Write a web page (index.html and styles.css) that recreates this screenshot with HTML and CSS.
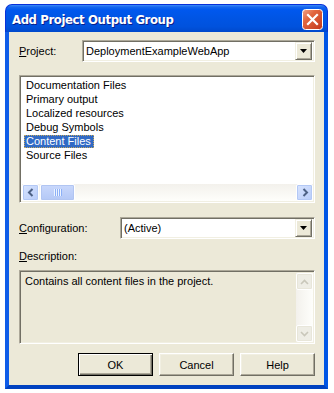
FILE: index.html
```html
<!DOCTYPE html>
<html>
<head>
<meta charset="utf-8">
<link rel="stylesheet" href="styles.css">
</head>
<body>
<div class="window">
  <div class="titlebar">
    <span class="title">Add Project Output Group</span>
    <span class="close">
      <svg width="21" height="21" viewBox="0 0 21 21">
        <defs>
          <linearGradient id="cg" x1="0" y1="0" x2="1" y2="1">
            <stop offset="0" stop-color="#F0A58A"/>
            <stop offset="0.35" stop-color="#E2673F"/>
            <stop offset="1" stop-color="#C2361A"/>
          </linearGradient>
        </defs>
        <rect x="0.5" y="0.5" width="20" height="20" rx="3" fill="url(#cg)" stroke="#FFFFFF"/>
        <path d="M6 6 L15 15 M15 6 L6 15" stroke="#FFFFFF" stroke-width="2.2" stroke-linecap="square"/>
      </svg>
    </span>
  </div>
  <div class="body">
    <div class="row project">
      <span class="label label-project"><u>P</u>roject:</span>
      <div class="combo">
        <span class="combo-text">DeploymentExampleWebApp</span>
        <span class="drop"><svg width="7" height="4" viewBox="0 0 7 4"><path d="M0 0 H7 L3.5 4 Z" fill="#000"/></svg></span>
      </div>
    </div>
    <div class="listbox">
      <ul class="items">
        <li>Documentation Files</li>
        <li>Primary output</li>
        <li>Localized resources</li>
        <li>Debug Symbols</li>
        <li class="sel-row"><span class="selected">Content Files</span></li>
        <li>Source Files</li>
      </ul>
      <div class="hscroll">
        <span class="sbtn"><svg width="8" height="9" viewBox="0 0 8 9"><path d="M5.5 1 L2 4.5 L5.5 8" fill="none" stroke="#4D6185" stroke-width="2"/></svg></span>
        <span class="thumb"><span class="grip"></span></span>
        <span class="track"></span>
        <span class="sbtn"><svg width="8" height="9" viewBox="0 0 8 9"><path d="M2.5 1 L6 4.5 L2.5 8" fill="none" stroke="#4D6185" stroke-width="2"/></svg></span>
      </div>
    </div>
    <div class="row config">
      <span class="label label-config"><u>C</u>onfiguration:</span>
      <div class="combo">
        <span class="combo-text">(Active)</span>
        <span class="drop"><svg width="7" height="4" viewBox="0 0 7 4"><path d="M0 0 H7 L3.5 4 Z" fill="#000"/></svg></span>
      </div>
    </div>
    <div class="desc-label"><u>D</u>escription:</div>
    <div class="descbox">
      <div class="desc-text">Contains all content files in the project.</div>
      <div class="vscroll">
        <span class="vbtn"><svg width="9" height="6" viewBox="0 0 9 6"><path d="M1 5 L4.5 1.5 L8 5" fill="none" stroke="#C9C7BA" stroke-width="1.6"/></svg></span>
        <span class="vtrack"></span>
        <span class="vbtn"><svg width="9" height="6" viewBox="0 0 9 6"><path d="M1 1 L4.5 4.5 L8 1" fill="none" stroke="#C9C7BA" stroke-width="1.6"/></svg></span>
      </div>
    </div>
    <div class="buttons">
      <span class="btn default">OK</span>
      <span class="btn">Cancel</span>
      <span class="btn">Help</span>
    </div>
  </div>
</div>
</body>
</html>
```

FILE: styles.css
```css
* { box-sizing: border-box; }
html, body { margin: 0; padding: 0; background: #FFFFFF; }
body {
  font-family: "Liberation Sans", Arial, sans-serif;
  font-size: 11px;
  color: #000;
}
.window {
  width: 323px;
  margin: 4px 0 0 5px;
}
.titlebar {
  height: 28px;
  flex: none;
  border-radius: 7px 7px 0 0;
  background: linear-gradient(#3C8DF8 0, #1767EE 2px, #0058EE 5px, #0055E5 45%, #0052DD 80%, #0049CC 100%);
  border: 1px solid #0831D9;
  border-bottom: none;
  display: flex;
  align-items: center;
  justify-content: space-between;
  padding: 1px 4px 0 6px;
}
.title {
  color: #FFFFFF;
  font-weight: bold;
  font-size: 13px;
  letter-spacing: -0.4px;
  font-family: "Liberation Sans Narrow", "DejaVu Sans Condensed", "Liberation Sans", sans-serif;
  text-shadow: 1px 1px 0 #0A1E8C;
}
.close { display: flex; margin-top: 1px; }
.body {
  background: #ECE9D8;
  border: 4px solid #0055E5;
  border-top: none;
  border-left-color: #0F5CE8;
  border-bottom-color: #0042C0;
  padding: 8px 9px 9px 10px;
  display: flex;
  flex-direction: column;
}
.body > * { flex: none; }
.row {
  display: flex;
  align-items: center;
  height: 22px;
}
.config { margin-top: 14px; }
.label { flex: none; }
.label-project { width: 63px; }
.label-config { width: 101px; }
.combo {
  flex: 1;
  height: 22px;
  background: #FFFFFF;
  border: 1px solid #ACA899;
  border-right-color: #FFFFFF;
  border-bottom-color: #FFFFFF;
  box-shadow: inset 1px 1px 0 #716F64, inset -1px -1px 0 #F1EFE2;
  display: flex;
  align-items: center;
  padding: 2px 2px 2px 3px;
}
.combo-text { flex: 1; }
.drop {
  width: 17px;
  height: 18px;
  flex: none;
  background: #ECE9D8;
  border: 1px solid #F1EFE2;
  border-right-color: #716F64;
  border-bottom-color: #716F64;
  box-shadow: inset 1px 1px 0 #FFFFFF, inset -1px -1px 0 #ACA899;
  display: flex;
  align-items: center;
  justify-content: center;
}
.listbox {
  margin-top: 13px;
  height: 128px;
  background: #FFFFFF;
  border: 1px solid #ACA899;
  border-right-color: #FFFFFF;
  border-bottom-color: #FFFFFF;
  box-shadow: inset 1px 1px 0 #716F64, inset -1px -1px 0 #F1EFE2;
  display: flex;
  flex-direction: column;
  padding: 2px 1px 1px 2px;
}
.items {
  list-style: none;
  margin: 0;
  padding: 1px 0 0 2px;
  flex: 1;
}
.items li {
  height: 14px;
  line-height: 13px;
  padding-left: 2px;
}
.items li.sel-row { padding-left: 0; }
.selected {
  display: inline-block;
  background: #316AC5;
  color: #FFFFFF;
  outline: 1px dotted #C5A85E;
  outline-offset: -1px;
  padding: 0 3px 0 2px;
  height: 13px;
}
.hscroll {
  height: 17px;
  flex: none;
  display: flex;
  background: linear-gradient(#F3F1EC, #FEFEFB);
}
.sbtn {
  width: 17px;
  height: 17px;
  flex: none;
  border: 1px solid #FFFFFF;
  border-radius: 2px;
  background: linear-gradient(135deg, #D8E4FE, #B8CCF9);
  box-shadow: inset 0 0 0 1px #B3C8F5;
  display: flex;
  align-items: center;
  justify-content: center;
}
.thumb {
  width: 35px;
  height: 17px;
  flex: none;
  margin-left: 1px;
  border: 1px solid #FFFFFF;
  border-radius: 2px;
  background: linear-gradient(#C9D8FC, #B4C8F6);
  box-shadow: inset 0 0 0 1px #B1C5F2;
  display: flex;
  align-items: center;
  justify-content: center;
}
.grip {
  width: 8px;
  height: 7px;
  background: repeating-linear-gradient(to right, #EEF4FE 0, #EEF4FE 1px, #8CB0F8 1px, #8CB0F8 2px);
}
.track { flex: 1; }
.desc-label {
  margin-top: 11px;
  height: 13px;
  line-height: 13px;
}
.descbox {
  margin-top: 7px;
  height: 74px;
  background: #ECE9D8;
  border: 1px solid #ACA899;
  border-right-color: #FFFFFF;
  border-bottom-color: #FFFFFF;
  box-shadow: inset 1px 1px 0 #716F64, inset -1px -1px 0 #F1EFE2;
  display: flex;
  padding: 2px 1px 1px 2px;
}
.desc-text {
  flex: 1;
  padding: 2px 0 0 3px;
  line-height: 13px;
}
.vscroll {
  width: 17px;
  flex: none;
  display: flex;
  flex-direction: column;
  background: linear-gradient(to right, #F3F1EC, #FEFEFB);
}
.vbtn {
  width: 17px;
  height: 17px;
  flex: none;
  border: 1px solid #FFFFFF;
  border-radius: 2px;
  background: #EEEDE5;
  box-shadow: inset 0 0 0 1px #E8E6DA;
  display: flex;
  align-items: center;
  justify-content: center;
}
.vtrack { flex: 1; }
.buttons {
  margin-top: 9px;
  height: 23px;
  display: flex;
  justify-content: flex-end;
  gap: 6px;
}
.btn {
  width: 75px;
  height: 23px;
  display: flex;
  align-items: center;
  justify-content: center;
  background: #ECE9D8;
  border: 1px solid #FFFFFF;
  border-right-color: #716F64;
  border-bottom-color: #716F64;
  box-shadow: inset -1px -1px 0 #ACA899, inset 1px 1px 0 #F1EFE2;
}
.btn.default {
  border: 1px solid #000000;
  box-shadow: inset 1px 1px 0 #FFFFFF, inset -1px -1px 0 #716F64, inset -2px -2px 0 #ACA899;
}
```
